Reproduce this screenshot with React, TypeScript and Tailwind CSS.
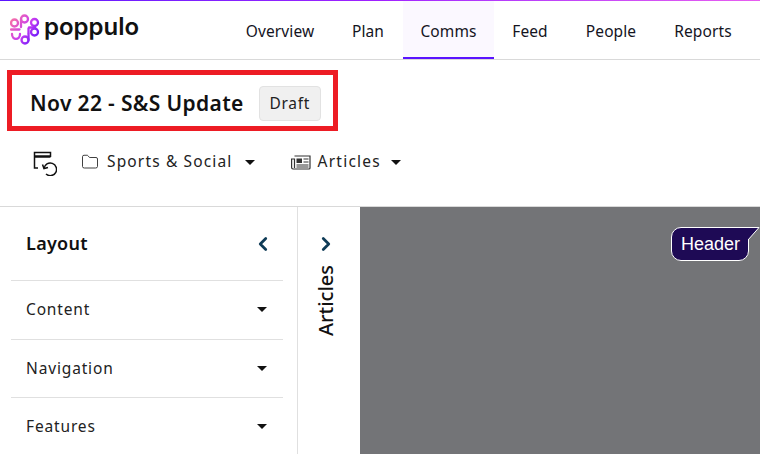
import { ChevronLeft, ChevronRight, Folder } from "lucide-react";

const tabs = ["Overview", "Plan", "Comms", "Feed", "People", "Reports"];
const tabWidths = ["w-[106px]", "w-[70px]", "w-[91px]", "w-[72px]", "w-[90px]", "w-[94px]"];
const sections = ["Content", "Navigation", "Features"];

function Caret() {
  return <span className="block h-0 w-0 border-x-[5px] border-t-[5px] border-x-transparent border-t-[#111]" />;
}

function Logo() {
  return (
    <svg width="30" height="31" viewBox="0 0 30 31" fill="none" strokeWidth="2.300" strokeLinecap="round">
      <defs>
        <linearGradient id="logo-grad" x1="0" y1="2" x2="30" y2="24" gradientUnits="userSpaceOnUse">
          <stop offset="0" stopColor="#ff7a9a" />
          <stop offset="0.55" stopColor="#c83cf0" />
          <stop offset="1" stopColor="#5a14ff" />
        </linearGradient>
      </defs>
      <g stroke="url(#logo-grad)">
        <circle cx="4.500" cy="9" r="3.500" />
        <path d="M1 15.500h8.500" />
        <circle cx="14.500" cy="5" r="3.500" />
        <path d="M11 5v8" />
        <circle cx="24.500" cy="8.500" r="3.500" />
        <path d="M19 13.500h6" />
        <circle cx="24.500" cy="18" r="3.500" />
        <path d="M18.500 14.500v4.500" />
        <circle cx="15" cy="26" r="3.500" />
        <path d="M18.500 26v-6" />
        <path d="M2 20c0 6.500 8 6.500 8 0" />
      </g>
    </svg>
  );
}

function RestoreIcon() {
  return (
    <svg width="24" height="25" viewBox="0 0 24 25" fill="none" stroke="#111" strokeWidth="1.500">
      <path d="M5 17H1.500V1.500h16V6" />
      <path d="M1.500 5.500h16" strokeWidth="2.500" />
      <path d="M11 17.500a6.300 6.300 0 1 1 2 5.500" />
      <path d="M9.500 13.500l1.500 4 4-1" />
    </svg>
  );
}

function NewsIcon() {
  return (
    <svg width="20" height="15" viewBox="0 0 20 15" fill="none" stroke="#333" strokeWidth="1.200">
      <path d="M3.500 1h15.500v12a1 1 0 0 1-1 1H2a1.400 1.400 0 0 1-1.400-1.400V4h2.900v9" />
      <rect x="5.500" y="3.500" width="5.500" height="4.500" fill="#333" stroke="none" />
      <path d="M12.500 4h5M12.500 7h5M5.500 10h12M5.500 12h12" />
    </svg>
  );
}

export default function App() {
  return (
    <div className="flex h-[454px] w-[760px] flex-col overflow-hidden bg-white font-['Noto_Sans',sans-serif] text-[#14141e]">
      <div className="h-px shrink-0 bg-gradient-to-r from-[#5a14ff] via-[#a020ff] to-[#e85cf0]" />
      <header className="flex h-[59px] shrink-0 items-stretch justify-between border-b border-[#d9d9d9] pl-[10px]">
        <div className="flex items-center gap-[4px] pb-[1px]">
          <Logo />
          <span className="mb-[5px] font-['Inter',sans-serif] text-[24px] leading-none font-semibold text-[#111]">
            poppulo
          </span>
        </div>
        <nav className="mr-[10px] flex">
          {tabs.map((tab, i) => (
            <div
              key={tab}
              className={`flex items-center justify-center text-[15.5px] tracking-[0.1px] ${tabWidths[i]} ${
                tab === "Comms" ? "border-b-2 border-[#5a14ff] bg-[#fbf8ff] pt-[6px]" : "pt-[4px]"
              }`}
            >
              {tab}
            </div>
          ))}
        </nav>
      </header>

      <div className="mt-[10px] ml-[7px] flex h-[61px] w-[331px] shrink-0 items-center gap-[15px] border-[5px] border-[#ed1c24] pt-[6px] pl-[18px]">
        <h1 className="text-[21px] leading-none font-semibold tracking-[0.35px] text-[#111]">Nov 22 - S&amp;S Update</h1>
        <span className="flex h-[35px] w-[62px] items-center justify-center rounded-[4px] border border-[#e2e2e2] bg-[#f0f0f0] text-[15.5px] tracking-[0.7px] text-[#222]">
          Draft
        </span>
      </div>

      <div className="flex h-[75px] shrink-0 items-center pb-[13px] pl-[33px] text-[#222]">
        <span className="mt-[3px]">
          <RestoreIcon />
        </span>
        <Folder className="ml-[24px] h-[18px] w-[18px] text-[#333]" strokeWidth={1.25} />
        <span className="ml-[8px] text-[15.5px] tracking-[1.15px]">Sports &amp; Social</span>
        <span className="ml-[12px]">
          <Caret />
        </span>
        <span className="ml-[36px]">
          <NewsIcon />
        </span>
        <span className="ml-[7px] text-[15.5px] tracking-[1.25px]">Articles</span>
        <span className="ml-[10px]">
          <Caret />
        </span>
      </div>

      <main className="flex min-h-0 flex-1 border-t border-[#d9d9d9]">
        <aside className="w-[298px] shrink-0 border-r border-[#e0e0e0] pr-[14px] pl-[11px]">
          <div className="flex h-[74px] items-center justify-between border-b border-[#e0e0e0] pr-[9px] pl-[15px]">
            <span className="text-[18px] font-semibold tracking-[0.3px] text-[#111]">Layout</span>
            <ChevronLeft className="h-[22px] w-[22px] text-[#0f3b57]" strokeWidth={3} />
          </div>
          {sections.map((name) => (
            <div
              key={name}
              className="flex h-[58.5px] items-center justify-between border-b border-[#e0e0e0] pr-[16px] pl-[15px] last:border-b-0 last:pb-[2px]"
            >
              <span className="text-[15.5px] tracking-[0.85px] text-[#222]">{name}</span>
              <Caret />
            </div>
          ))}
        </aside>
        <div className="flex w-[62px] shrink-0 flex-col items-center pt-[26px] pr-[6px]">
          <ChevronRight className="h-[22px] w-[22px] text-[#0f3b57]" strokeWidth={3} />
          <span className="mt-[10px] mr-[1px] rotate-180 text-[20px] leading-[24px] font-medium text-[#111] [writing-mode:vertical-rl]">
            Articles
          </span>
        </div>
        <section className="relative flex-1 bg-[#737477]">
          <div className="absolute top-[20px] left-[311px] flex h-[34px] w-[78px] items-center rounded-[10px] rounded-tr-none border border-white bg-[#1e0a55] pl-[9px] font-['Liberation_Sans',sans-serif] text-[18px] text-white">
            Header
            <svg className="absolute -top-px -right-[12px]" width="12" height="14" viewBox="0 0 12 14">
              <path d="M0 0.500H11L0 13Z" fill="#1e0a55" />
              <path d="M0 0.500H11L0 13" fill="none" stroke="white" />
            </svg>
          </div>
        </section>
      </main>
    </div>
  );
}
